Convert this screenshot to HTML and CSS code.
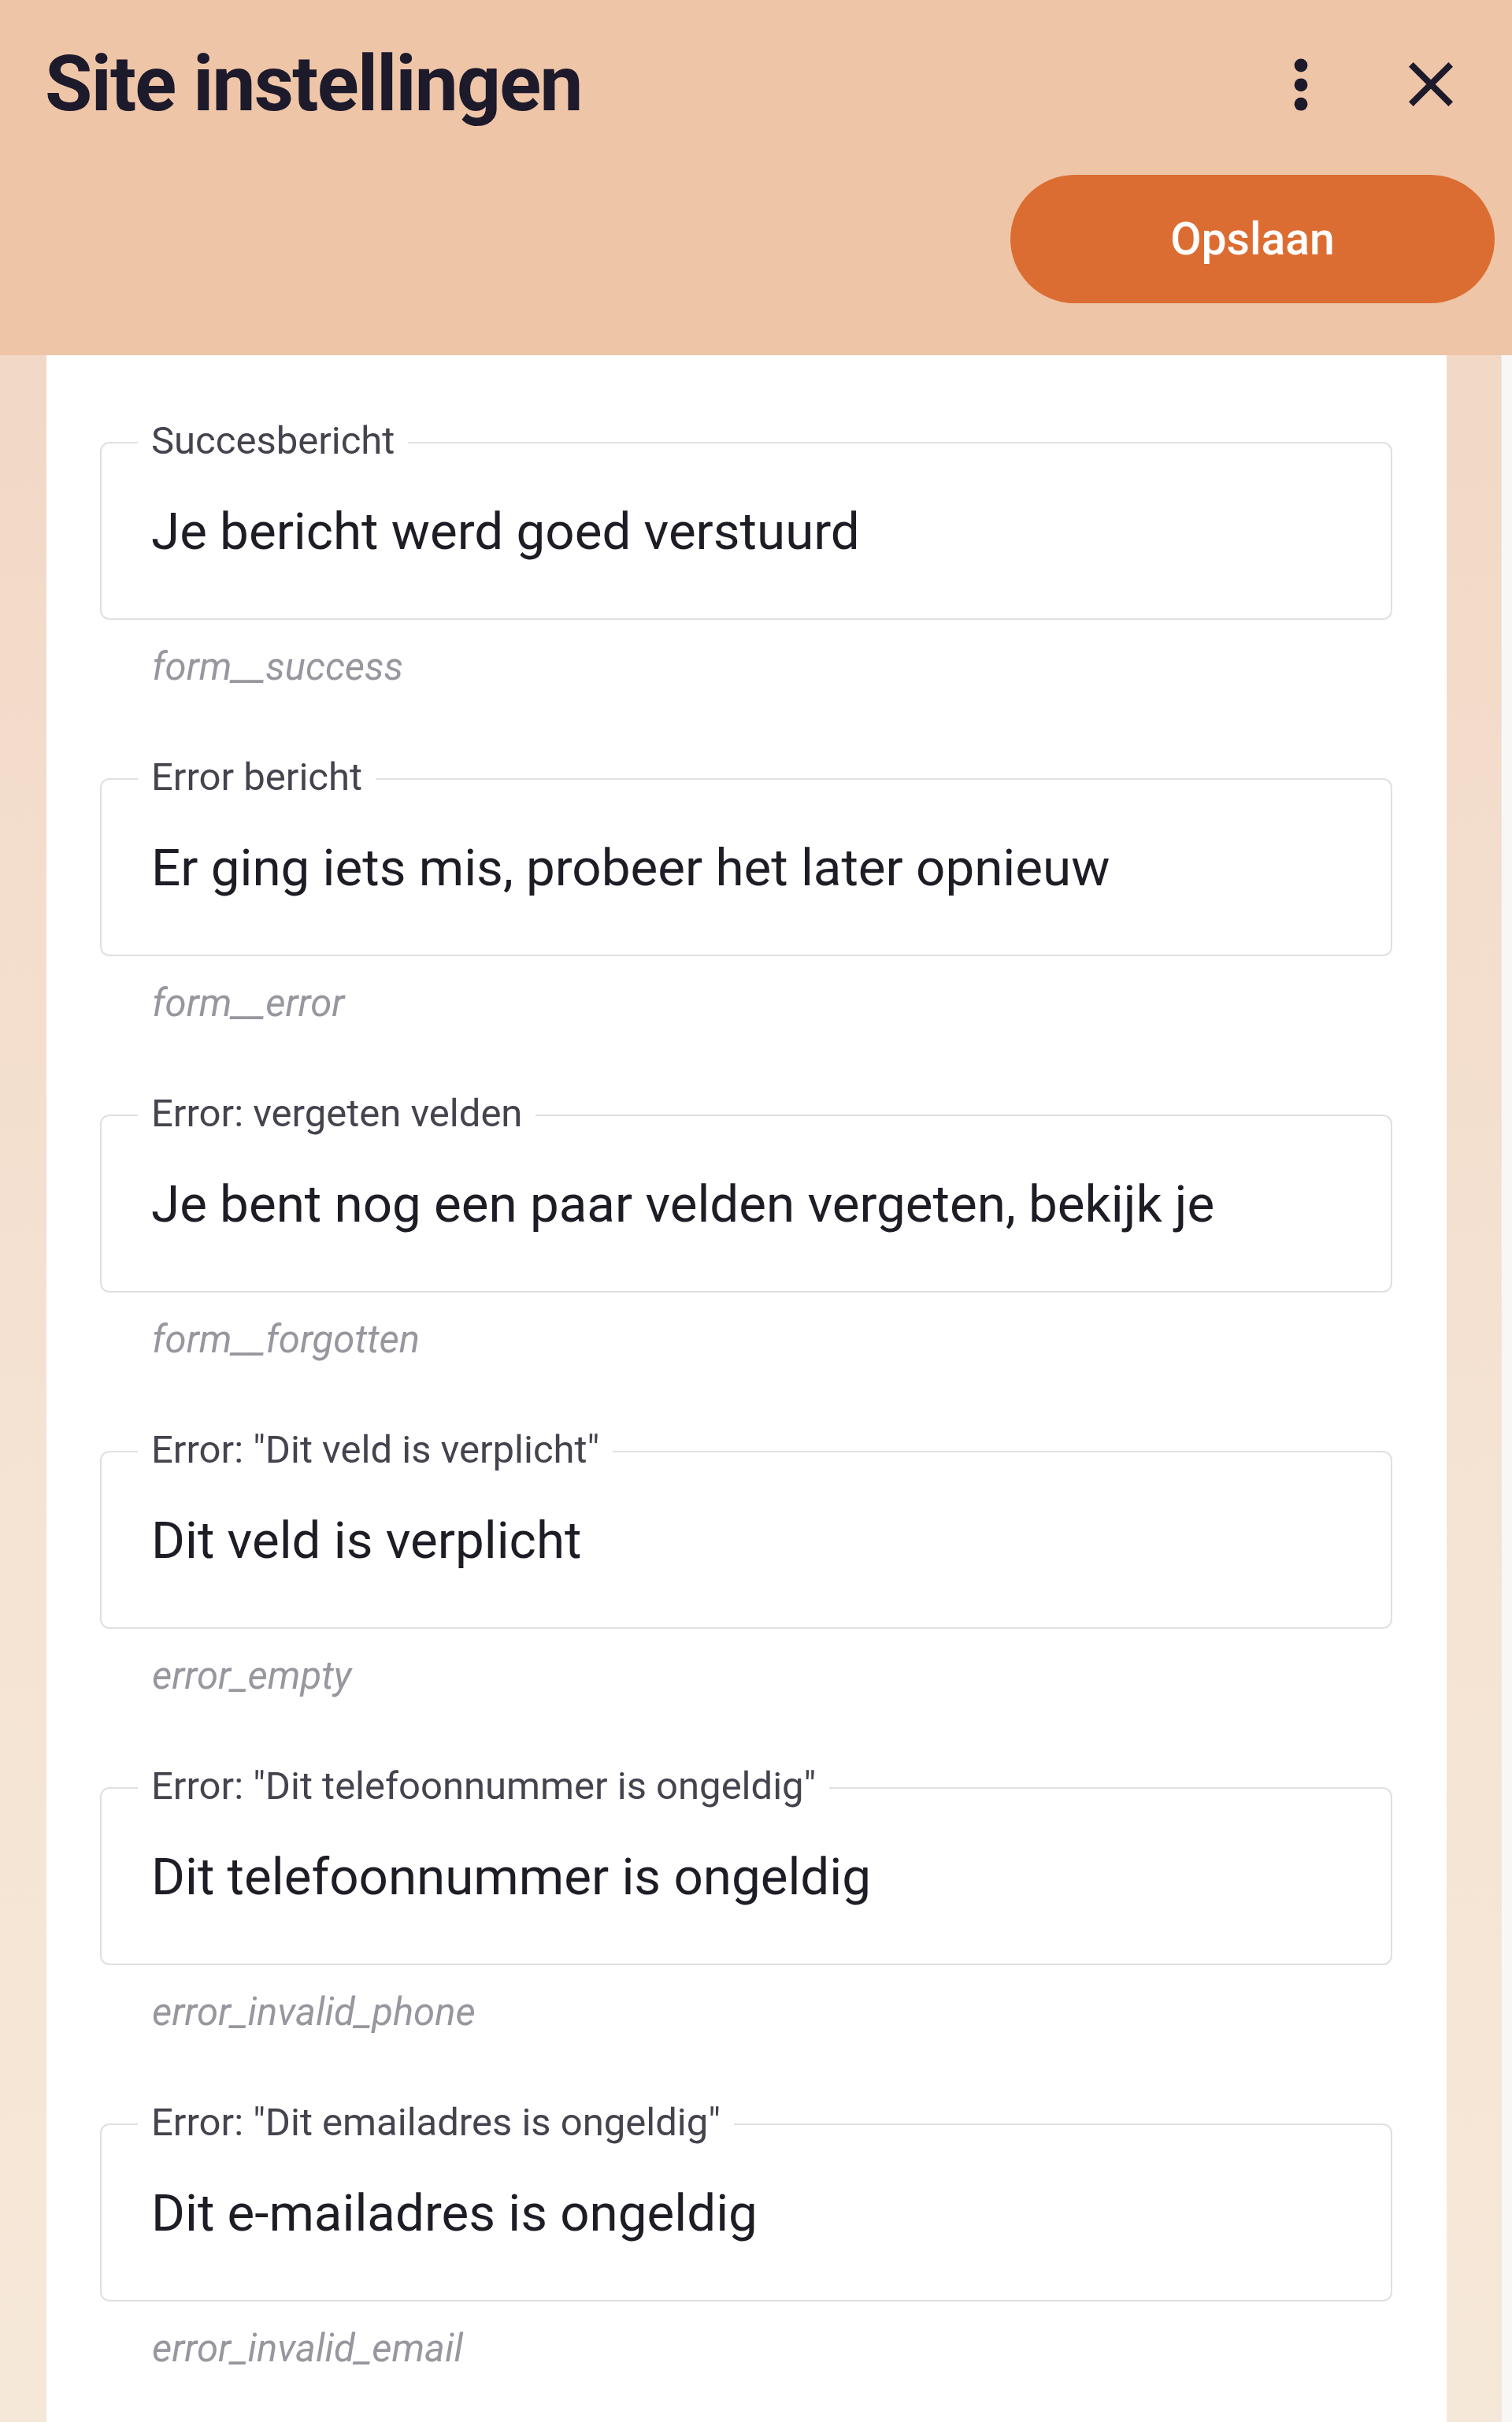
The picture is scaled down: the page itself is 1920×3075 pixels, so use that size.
FILE: index.html
```html
<!DOCTYPE html>
<html lang="nl">
<head>
<meta charset="utf-8">
<title>Site instellingen</title>
<link rel="stylesheet" href="styles.css">
</head>
<body>
<header class="topbar">
  <div class="toprow">
    <h1 class="title">Site instellingen</h1>
    <div class="actions">
      <button class="icon-btn" aria-label="Meer opties">
        <svg viewBox="0 0 24 24" width="96" height="96"><circle cx="12" cy="6" r="2.1"/><circle cx="12" cy="12.2" r="2.1"/><circle cx="12" cy="18.3" r="2.1"/></svg>
      </button>
      <button class="icon-btn" aria-label="Sluiten">
        <svg viewBox="0 0 24 24" width="96" height="96"><path d="M5.7 5.7 L18.3 18.3 M18.3 5.7 L5.7 18.3" fill="none" stroke="currentColor" stroke-width="2"/></svg>
      </button>
    </div>
  </div>
  <div class="saverow">
    <button class="save">Opslaan</button>
  </div>
</header>
<main class="content">
  <div class="card">
    <div class="group">
      <div class="field">
        <span class="field-label">Succesbericht</span>
        <div class="field-value">Je bericht werd goed verstuurd</div>
      </div>
      <div class="helper">form__success</div>
    </div>
    <div class="group">
      <div class="field">
        <span class="field-label">Error bericht</span>
        <div class="field-value">Er ging iets mis, probeer het later opnieuw</div>
      </div>
      <div class="helper">form__error</div>
    </div>
    <div class="group">
      <div class="field">
        <span class="field-label">Error: vergeten velden</span>
        <div class="field-value">Je bent nog een paar velden vergeten, bekijk je</div>
      </div>
      <div class="helper">form__forgotten</div>
    </div>
    <div class="group">
      <div class="field">
        <span class="field-label">Error: "Dit veld is verplicht"</span>
        <div class="field-value">Dit veld is verplicht</div>
      </div>
      <div class="helper">error_empty</div>
    </div>
    <div class="group">
      <div class="field">
        <span class="field-label">Error: "Dit telefoonnummer is ongeldig"</span>
        <div class="field-value">Dit telefoonnummer is ongeldig</div>
      </div>
      <div class="helper">error_invalid_phone</div>
    </div>
    <div class="group">
      <div class="field">
        <span class="field-label">Error: "Dit emailadres is ongeldig"</span>
        <div class="field-value">Dit e-mailadres is ongeldig</div>
      </div>
      <div class="helper">error_invalid_email</div>
    </div>
  </div>
  <div class="spacer"></div>
  <div class="scrollbar"></div>
</main>
</body>
</html>
```
FILE: styles.css
```css
html, body {
  margin: 0;
  padding: 0;
}
body {
  width: 1920px;
  height: 3075px;
  overflow: hidden;
  font-family: Roboto, "Noto Sans", "Liberation Sans", sans-serif;
  background: #f4e2d3;
}
.topbar {
  background: #efc5a8;
  height: 451px;
  box-sizing: border-box;
  padding: 58px 22px 66px 57px;
  display: flex;
  flex-direction: column;
}
.toprow {
  display: flex;
  align-items: center;
  justify-content: space-between;
  height: 98px;
}
.title {
  margin: 0;
  font-size: 98px;
  line-height: 98px;
  font-weight: 700;
  letter-spacing: -1.7px;
  color: #1c1a2b;
}
.actions {
  display: flex;
  align-items: center;
  gap: 69px;
  margin-right: 33px;
}
.icon-btn {
  width: 96px;
  height: 96px;
  padding: 0;
  border: 0;
  background: transparent;
  color: #1c1a2b;
  fill: #1c1a2b;
  display: block;
}
.icon-btn svg {
  display: block;
}
.saverow {
  display: flex;
  justify-content: flex-end;
  margin-top: 66px;
}
.save {
  width: 615px;
  height: 163px;
  border: 0;
  border-radius: 82px;
  background: #dc6d32;
  color: #ffffff;
  font-family: Roboto, "Noto Sans", sans-serif;
  font-weight: 500;
  font-size: 57px;
  padding: 0;
}
.content {
  display: flex;
  height: 2624px;
  padding-left: 59px;
  background: linear-gradient(180deg, #f2d8c6 0%, #f5e4d4 60%, #f6e8d8 100%);
}
.card {
  width: 1778px;
  flex: none;
  background: #ffffff;
  box-sizing: border-box;
  padding: 110px 69px 0 68px;
}
.spacer {
  flex: 1;
}
.scrollbar {
  width: 13px;
  flex: none;
  background: #f8f7f6;
  border-left: 1px solid #ebe7e4;
}
.group + .group {
  margin-top: 112px;
}
.field {
  position: relative;
  height: 226px;
  box-sizing: border-box;
  border: 2px solid #e0e0e0;
  border-radius: 12px;
  padding: 73px 63px 0;
}
.field-label {
  position: absolute;
  left: 46px;
  top: -28px;
  padding: 0 17px;
  background: #ffffff;
  font-size: 49px;
  line-height: 49px;
  color: #45434e;
  white-space: nowrap;
}
.field-value {
  font-size: 65.5px;
  line-height: 77px;
  color: #1e1c25;
  white-space: nowrap;
  overflow: hidden;
}
.helper {
  margin: 31px 0 0 66px;
  font-size: 49px;
  line-height: 58px;
  font-style: italic;
  color: #98969e;
}
```
